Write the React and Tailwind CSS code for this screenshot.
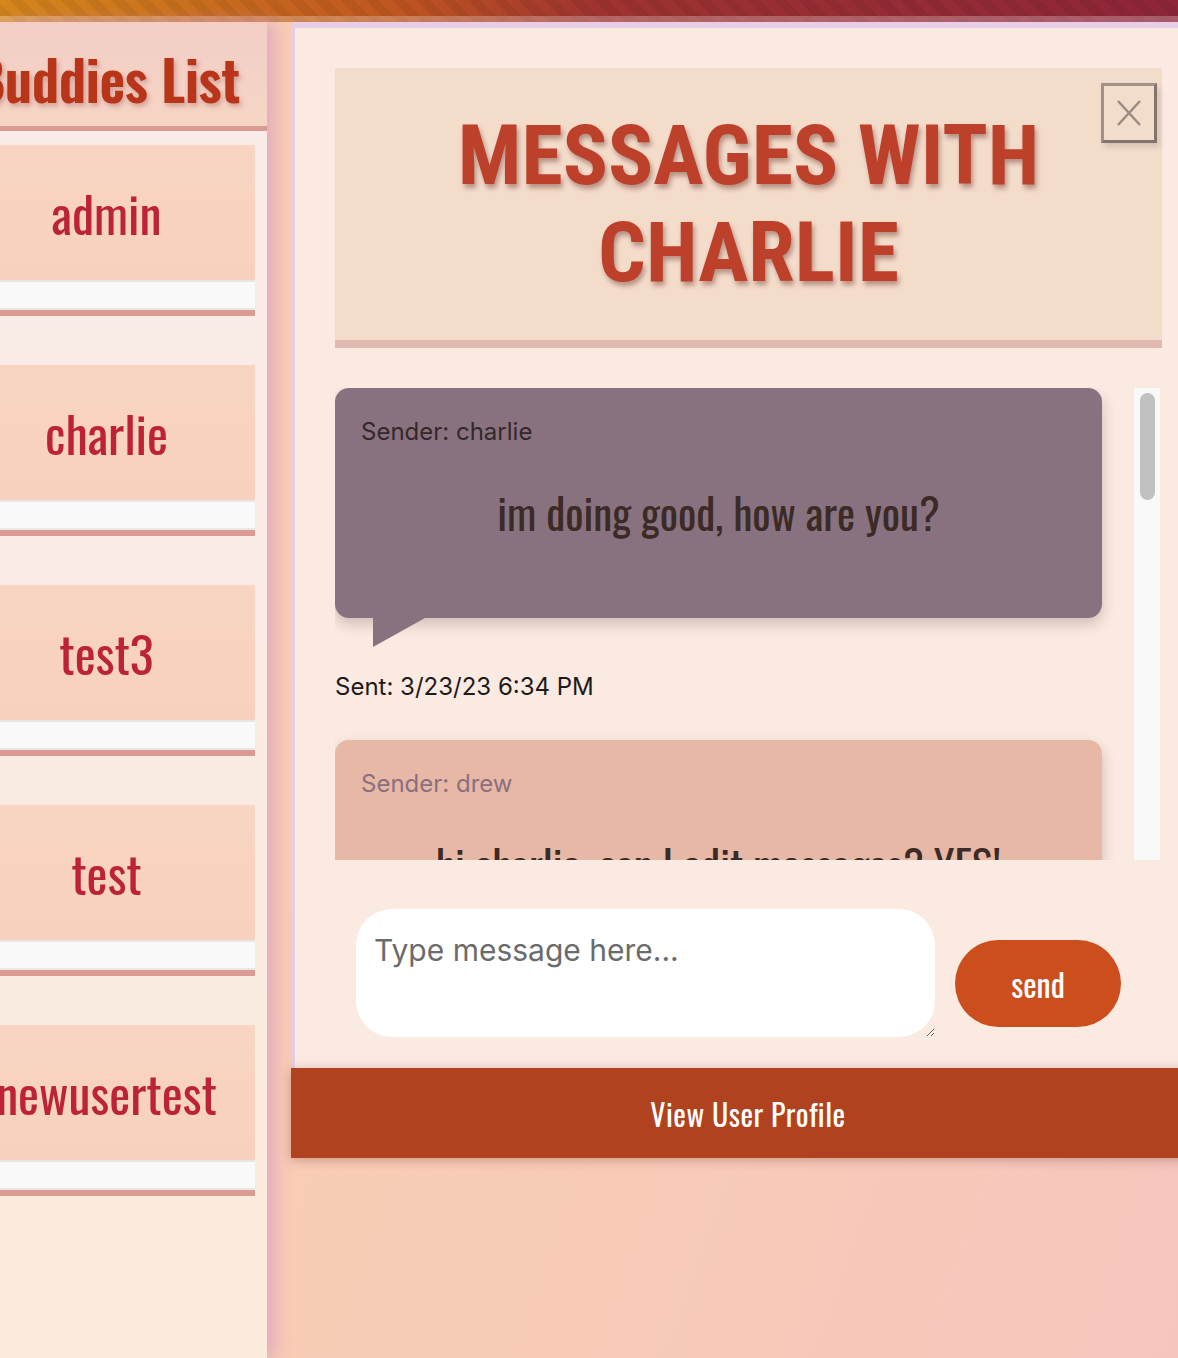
import React from 'react';

const condensed =
  "font-['Oswald','Roboto_Condensed','Liberation_Sans_Narrow','DejaVu_Sans_Condensed',sans-serif]";
const titleFont = "font-['Roboto_Condensed','Liberation_Sans_Narrow','DejaVu_Sans_Condensed',sans-serif]";
const bodyFont = "font-['Inter','Roboto',sans-serif]";

const buddies = ['admin', 'charlie', 'test3', 'test', 'newusertest'];

function BuddyItem({ name }) {
  return (
    <li>
      <div
        className={`h-[135px] bg-[linear-gradient(180deg,#f8d5c3,#f7d1bb)] flex items-center justify-center text-[50px] text-[#bc2336] ${condensed}`}
      >
        {name}
      </div>
      <div className="h-[30px] border-y-2 border-[#e7e7e7] bg-[#f9f9f9]" />
      <div className="h-[6px] bg-[#dc9b92]" />
    </li>
  );
}

function Sidebar() {
  return (
    <aside className="relative z-10 w-[267px] shrink-0 overflow-hidden bg-[linear-gradient(180deg,#f9ebea,#fbebdc)] shadow-[8px_0_16px_rgba(200,130,200,0.45)]">
      <div className="ml-[-42px] w-[309px]">
        <div className="h-[109px] border-b-[5px] border-[#dc9b92] bg-[linear-gradient(180deg,#f2cec6,#f6d5c5)] pr-[12px] pt-[8px] flex items-center justify-center">
          <h1
            className={`whitespace-nowrap text-[56px] leading-none font-semibold tracking-[-0.5px] text-[#b83519] [text-shadow:2px_3px_5px_rgba(150,60,60,0.35)] ${condensed}`}
          >
            Buddies List
          </h1>
        </div>
        <ul className="pt-[14px] pr-[12px] flex flex-col gap-[49px]">
          {buddies.map((b) => (
            <BuddyItem key={b} name={b} />
          ))}
        </ul>
      </div>
    </aside>
  );
}

function Bubble({ sender, text, tone }) {
  const incoming = tone === 'in';
  return (
    <div
      className={`w-[767px] h-[230px] rounded-[14px] px-[26px] pt-[30px] shadow-[0_6px_14px_rgba(60,30,30,0.22)] ${
        incoming ? 'bg-[#88727f]' : 'bg-[#e6b8a5]'
      }`}
    >
      <p
        className={`text-[24px] leading-[28px] ${bodyFont} ${incoming ? 'text-[#33282a]' : 'text-[#8b6f80]'}`}
      >
        Sender: {sender}
      </p>
      <p className={`mt-[39px] text-center text-[43px] leading-[54px] text-[#3b2a25] ${condensed}`}>{text}</p>
    </div>
  );
}

function Messages() {
  return (
    <div className="mt-[40px] h-[472px] flex">
      <div className="flex-1 overflow-hidden">
        <Bubble sender="charlie" text="im doing good, how are you?" tone="in" />
        <div className="ml-[38px] w-0 h-0 border-t-[29px] border-t-[#88727f] border-r-[52px] border-r-transparent" />
        <p className={`mt-[26px] text-[24px] leading-[28px] text-[#1f1a1a] ${bodyFont}`}>Sent: 3/23/23 6:34 PM</p>
        <div className="mt-[39px]">
          <Bubble sender="drew" text="hi charlie, can I edit messages? YES!" tone="out" />
        </div>
      </div>
      <div className="w-[27px] mr-[2px] shrink-0 bg-[#f9f9f9] border-l border-[#ececec] pt-[5px]">
        <div className="mx-auto w-[15px] h-[107px] rounded-full bg-[#c1c1c1]" />
      </div>
    </div>
  );
}

function ChatPanel() {
  return (
    <section className="w-[911px] border-l-4 border-t-[6px] border-[#e7cde6] bg-[#faeae1] px-[40px] pt-[40px] pb-[31px]">
      <div className="relative h-[280px] bg-[#f4dccb] border-b-8 border-[#e0b9b0] flex items-center justify-center">
        <h2
          className={`text-center uppercase text-[84px] leading-[97px] font-bold text-[#bd402b] [text-shadow:2px_4px_5px_rgba(90,30,20,0.4)] ${titleFont}`}
        >
          Messages with
          <br />
          charlie
        </h2>
        <button className="absolute right-[5px] top-[15px] w-[56px] h-[60px] border-[3px] border-[#a0928b] border-r-[#83746e] border-b-[#83746e] flex items-center justify-center shadow-[3px_4px_6px_rgba(0,0,0,0.12)]">
          <svg width="26" height="28" viewBox="0 0 26 28" fill="none">
            <path d="M2 2L24 26M24 2L2 26" stroke="#9a8a83" strokeWidth="2.5" />
          </svg>
        </button>
      </div>
      <Messages />
      <div className="mt-[49px] pl-[21px] flex items-start">
        <textarea
          placeholder="Type message here..."
          className={`w-[579px] h-[128px] rounded-[36px] bg-white px-[18px] pt-[22px] text-[30px] leading-[38px] text-[#333] placeholder:text-[#6b6b6b] outline-none ${bodyFont}`}
        />
        <button
          className={`ml-[20px] mt-[31px] w-[166px] h-[87px] rounded-[44px] bg-[#cc4e1c] text-white text-[32px] ${condensed}`}
        >
          send
        </button>
      </div>
    </section>
  );
}

export default function App() {
  return (
    <div className="h-[1358px] w-full overflow-hidden flex flex-col bg-[linear-gradient(110deg,#f9ceb3_0%,#f8cbb6_60%,#f6c5bd_100%)]">
      <div className="h-[22px] shrink-0 border-b-[6px] border-white/25 bg-[repeating-linear-gradient(45deg,rgba(0,0,0,0.06)_0px,rgba(0,0,0,0.06)_9px,transparent_9px,transparent_18px),linear-gradient(90deg,#d5871b_0%,#bf5520_34%,#9e3330_51%,#8e2539_100%)]" />
      <div className="flex flex-1 min-h-0">
        <Sidebar />
        <main className="flex-1 min-w-0 pl-[24px]">
          <ChatPanel />
          <button
            className={`w-[914px] h-[90px] bg-[#b1421f] text-white text-[30px] tracking-[0.5px] shadow-[0_2px_10px_rgba(90,40,30,0.3)] ${condensed}`}
          >
            View User Profile
          </button>
        </main>
      </div>
    </div>
  );
}
